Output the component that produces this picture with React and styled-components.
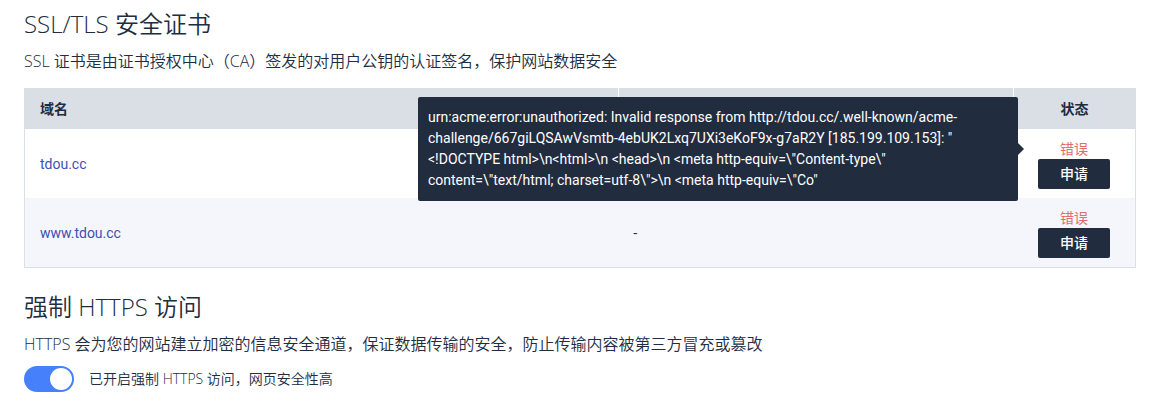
import React from "react";
import styled, { createGlobalStyle } from "styled-components";

const ink = "#222c3f";
const headGrey = "#dadee5";

const GlobalStyle = createGlobalStyle`
  * { box-sizing: border-box; }
  body {
    margin: 0;
    background: #fff;
    color: ${ink};
    font: 14px/20px "Open Sans", "Noto Sans CJK SC", sans-serif;
  }
`;

const Page = styled.main`
  padding: 8px 29px 16px 24px;
`;

const Section = styled.section`
  & + & { margin-top: 23px; }
`;

const Title = styled.h2`
  margin: 0 0 9px;
  font-size: 24px;
  line-height: 32px;
  font-weight: 350;
`;

const Intro = styled.p`
  margin: 0;
  font-size: 16px;
  line-height: 24px;
  font-weight: 350;
`;

const Table = styled.table`
  width: 100%;
  margin-top: 15px;
  table-layout: fixed;
  border-collapse: separate;
  border-spacing: 0;
  border: 1px solid ${headGrey};
  border-top: 0;
`;

const HeadCell = styled.th`
  width: ${(p) => p.$width || "auto"};
  height: 41px;
  padding: 0 15px;
  background: ${headGrey};
  text-align: ${(p) => p.$align || "left"};
  font-weight: 600;
  & + & { border-left: 1px solid #fff; }
`;

const Row = styled.tr`
  &:nth-child(even) { background: #f5f6fb; }
`;

const Cell = styled.td`
  height: 69px;
  padding: 0 15px;
  text-align: ${(p) => p.$align || "left"};
`;

const DomainLink = styled.a`
  color: #3f4fae;
  font-family: Roboto, sans-serif;
  text-decoration: none;
`;

const StatusStack = styled.div`
  display: flex;
  flex-direction: column;
  align-items: center;
`;

const ErrorText = styled.span`
  position: relative;
  color: #e06c6c;
`;

const Tooltip = styled.div`
  position: absolute;
  top: 50%;
  right: calc(100% + 42px);
  width: 600px;
  padding: 10px;
  transform: translateY(-50%);
  border-radius: 2px;
  background: ${ink};
  color: #fff;
  font-family: Roboto, sans-serif;
  line-height: 21px;
  text-align: left;
  white-space: pre;

  &::after {
    content: "";
    position: absolute;
    top: 46px;
    left: 100%;
    border: 6px solid transparent;
    border-right-width: 0;
    border-left-color: ${ink};
  }
`;

const ApplyButton = styled.button`
  width: 72px;
  height: 30px;
  padding: 0;
  border: 0;
  border-radius: 2px;
  background: ${ink};
  color: #fff;
  font: inherit;
  font-weight: 500;
  cursor: pointer;
`;

const SwitchLabel = styled.label`
  display: flex;
  align-items: center;
  gap: 15px;
  margin-top: 10px;
  font-weight: 350;
  cursor: pointer;
`;

const Switch = styled.input`
  appearance: none;
  width: 50px;
  height: 26px;
  margin: 0;
  padding: 2px;
  border-radius: 13px;
  background: #c5cad3;
  cursor: pointer;

  &::before {
    content: "";
    display: block;
    width: 22px;
    height: 22px;
    border-radius: 50%;
    background: #fff;
  }
  &:checked { background: #4680fb; }
  &:checked::before { margin-left: auto; }
`;

const errorLines = [
  "urn:acme:error:unauthorized: Invalid response from http://tdou.cc/.well-known/acme-",
  'challenge/667giLQSAwVsmtb-4ebUK2Lxq7UXi3eKoF9x-g7aR2Y [185.199.109.153]: "',
  '<!DOCTYPE html>\\n<html>\\n <head>\\n <meta http-equiv=\\"Content-type\\"',
  'content=\\"text/html; charset=utf-8\\">\\n <meta http-equiv=\\"Co"',
];

const domains = [
  { name: "tdou.cc", expires: "", error: errorLines.join("\n") },
  { name: "www.tdou.cc", expires: "-" },
];

export default function App() {
  return (
    <>
      <GlobalStyle />
      <Page lang="zh-CN">
        <Section>
          <Title>SSL/TLS 安全证书</Title>
          <Intro>SSL 证书是由证书授权中心（CA）签发的对用户公钥的认证签名，保护网站数据安全</Intro>
          <Table>
            <thead>
              <tr>
                <HeadCell>域名</HeadCell>
                <HeadCell $width="395px" />
                <HeadCell $width="122px" $align="center">状态</HeadCell>
              </tr>
            </thead>
            <tbody>
              {domains.map((d) => (
                <Row key={d.name}>
                  <Cell><DomainLink href="#">{d.name}</DomainLink></Cell>
                  <Cell>{d.expires}</Cell>
                  <Cell $align="center">
                    <StatusStack>
                      <ErrorText>
                        错误
                        {d.error && <Tooltip role="tooltip">{d.error}</Tooltip>}
                      </ErrorText>
                      <ApplyButton type="button">申请</ApplyButton>
                    </StatusStack>
                  </Cell>
                </Row>
              ))}
            </tbody>
          </Table>
        </Section>
        <Section>
          <Title>强制 HTTPS 访问</Title>
          <Intro>HTTPS 会为您的网站建立加密的信息安全通道，保证数据传输的安全，防止传输内容被第三方冒充或篡改</Intro>
          <SwitchLabel>
            <Switch type="checkbox" defaultChecked />
            已开启强制 HTTPS 访问，网页安全性高
          </SwitchLabel>
        </Section>
      </Page>
    </>
  );
}
